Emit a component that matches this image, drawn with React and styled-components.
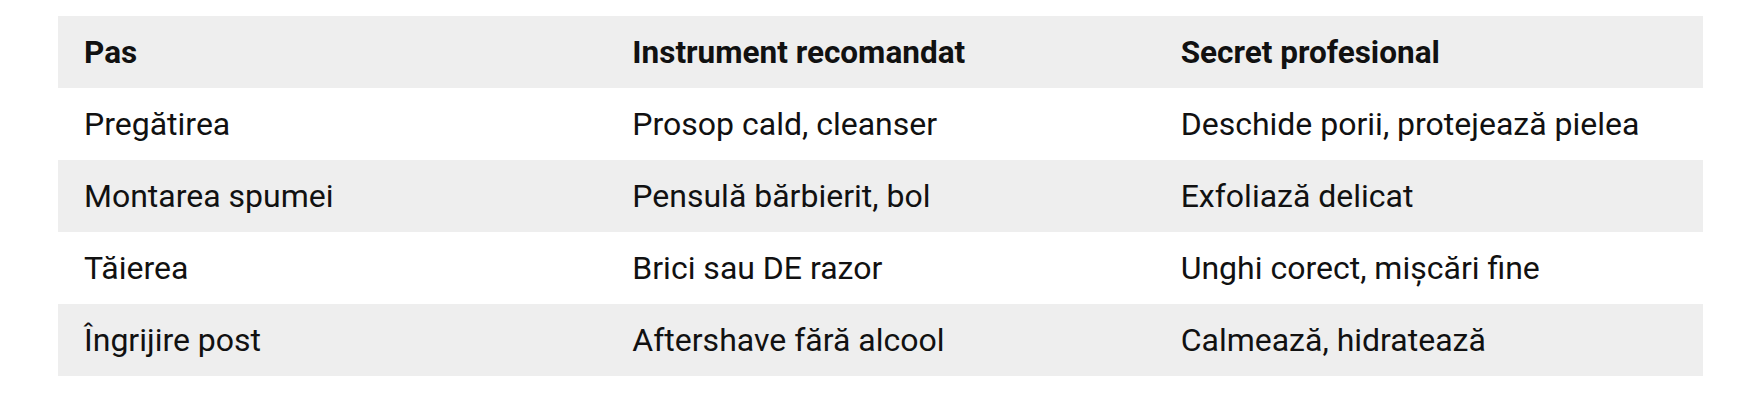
import React from "react";
import styled, { createGlobalStyle } from "styled-components";

const GlobalStyle = createGlobalStyle`
  body {
    margin: 0;
    background: #ffffff;
    font-family: Roboto, "Liberation Sans", Arial, sans-serif;
  }
`;

const Page = styled.div`
  padding: 16px 48px 0 58px;
`;

const Table = styled.table`
  width: 1645px;
  border-collapse: collapse;
  table-layout: fixed;
  color: #111111;
  font-size: 32px;
`;

const Row = styled.tr`
  height: 72px;
  background: ${(props) => (props.$shaded ? "#eeeeee" : "#ffffff")};
`;

const HeadCell = styled.th`
  padding: 0 26px;
  text-align: left;
  font-size: 31.5px;
  font-weight: 700;
`;

const Cell = styled.td`
  padding: 0 26px;
  font-weight: 400;
`;

const rows = [
  ["Pregătirea", "Prosop cald, cleanser", "Deschide porii, protejează pielea"],
  ["Montarea spumei", "Pensulă bărbierit, bol", "Exfoliază delicat"],
  ["Tăierea", "Brici sau DE razor", "Unghi corect, mișcări fine"],
  ["Îngrijire post", "Aftershave fără alcool", "Calmează, hidratează"],
];

export default function App() {
  return (
    <Page>
      <GlobalStyle />
      <Table>
        <thead>
          <Row $shaded>
            <HeadCell>Pas</HeadCell>
            <HeadCell>Instrument recomandat</HeadCell>
            <HeadCell>Secret profesional</HeadCell>
          </Row>
        </thead>
        <tbody>
          {rows.map((r, i) => (
            <Row key={r[0]} $shaded={i % 2 === 1}>
              {r.map((c) => (
                <Cell key={c}>{c}</Cell>
              ))}
            </Row>
          ))}
        </tbody>
      </Table>
    </Page>
  );
}
